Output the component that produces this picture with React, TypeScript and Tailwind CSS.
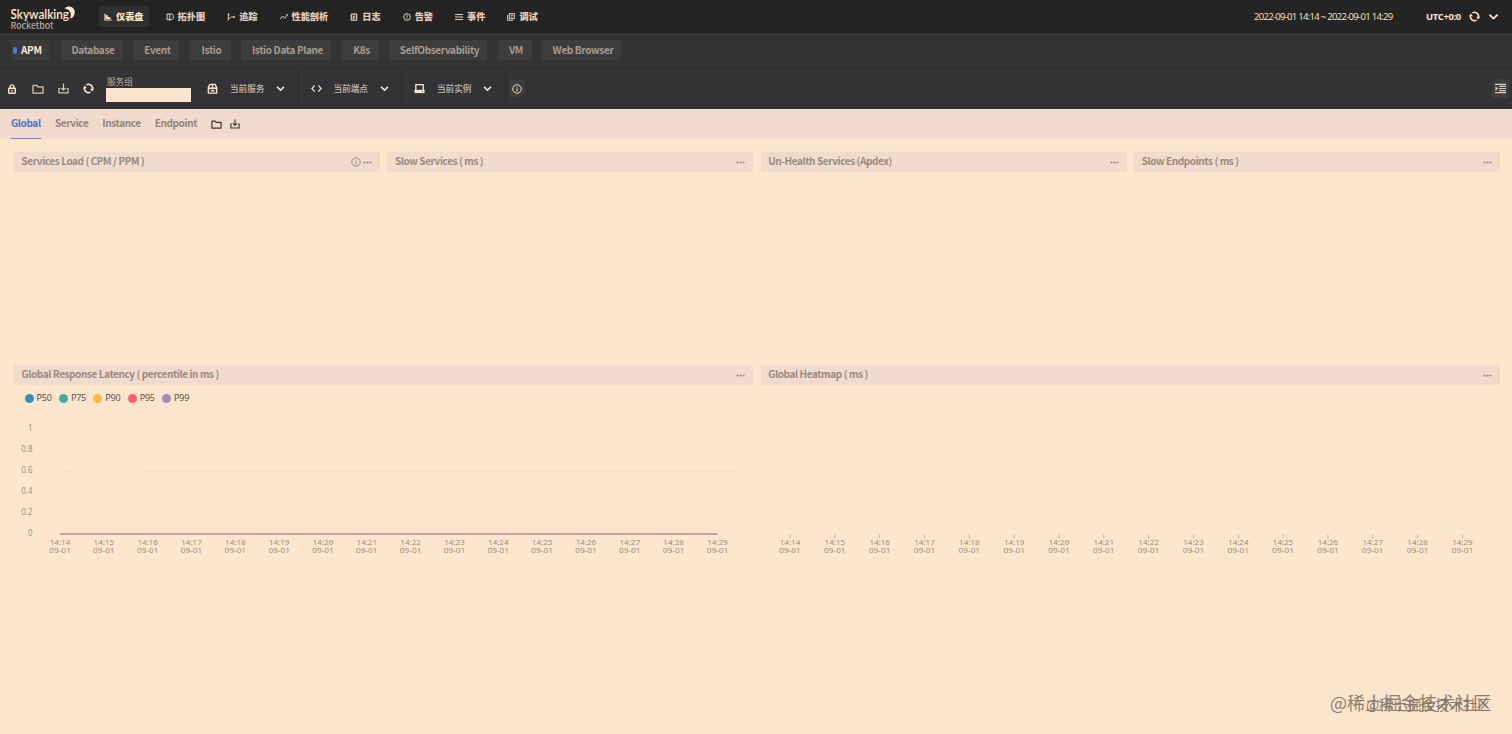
import type { ReactNode } from 'react';

type IconProps = { className?: string };

const Svg = ({ className = '', box = '0 0 24 24', children }: IconProps & { box?: string; children: ReactNode }) => (
  <svg viewBox={box} className={`shrink-0 ${className}`} fill="none" stroke="currentColor" strokeWidth={3}>
    {children}
  </svg>
);

const ChartIcon = (p: IconProps) => (
  <Svg {...p}>
    <path d="M3 2v19h20" strokeWidth={3.6} />
    <path d="M6 18V6h4.500v5h4v2h5v5z" fill="currentColor" stroke="none" />
  </Svg>
);

const TopologyIcon = (p: IconProps) => (
  <Svg {...p}>
    <path d="M11 3H3v17h8M11 1v22M12 3h6l4 4v9l-4 4h-6" />
  </Svg>
);

const TraceIcon = (p: IconProps) => (
  <Svg {...p}>
    <path d="M4 1v22M4 19c5 0 4-7 9-7h9" />
    <path d="M3 5h5" />
    <circle cx="21" cy="12" r="1.6" fill="currentColor" />
  </Svg>
);

const TrendIcon = (p: IconProps) => (
  <Svg {...p}>
    <path d="M1 18l7-9 6 7 8-11" />
    <circle cx="21.500" cy="5.500" r="1.200" fill="currentColor" />
  </Svg>
);

const LogIcon = (p: IconProps) => (
  <Svg {...p}>
    <rect x="4" y="3.500" width="16" height="18" rx="1" strokeWidth={3.6} />
    <path d="M8 9.500h8M8 13h8M8 16.500h5" />
  </Svg>
);

const InfoIcon = (p: IconProps) => (
  <Svg {...p}>
    <circle cx="12" cy="12" r="10.200" strokeWidth={2.2} />
    <path d="M12 10.500V18M12 6v2.600" strokeWidth={2.4} />
  </Svg>
);

const AlarmIcon = (p: IconProps) => (
  <Svg {...p}>
    <circle cx="12" cy="12" r="10" />
    <path d="M12 6v7.500M12 15.500V18" />
  </Svg>
);

const ListIcon = (p: IconProps) => (
  <Svg {...p}>
    <path d="M0 4.500h24M0 12h24M0 19.500h24" strokeWidth={3.6} />
  </Svg>
);

const DebugIcon = (p: IconProps) => (
  <Svg {...p}>
    <rect x="7" y="2" width="15" height="15" />
    <path d="M2 6v16h16M11 7h8M11 12h6" />
  </Svg>
);

const LockIcon = (p: IconProps) => (
  <Svg {...p}>
    <rect x="4" y="10" width="16" height="12" rx="1.500" strokeWidth={3.400} />
    <path d="M7.500 10V6.500a4.500 4.500 0 0 1 9 0V10" strokeWidth={3.200} />
    <circle cx="12" cy="16" r="2.200" fill="currentColor" stroke="none" />
  </Svg>
);

const FolderIcon = (p: IconProps) => (
  <Svg {...p}>
    <path d="M2 20V4.500h7l2.500 3H22V20z" strokeLinejoin="round" strokeWidth={2.500} />
  </Svg>
);

const DownloadIcon = (p: IconProps) => (
  <Svg {...p}>
    <path d="M5 12H2v9.500h20V12h-3M12 1v14M7 10.500l5 5 5-5" strokeLinejoin="round" strokeWidth={2.600} />
  </Svg>
);

const RefreshIcon = (p: IconProps) => (
  <Svg {...p}>
    <path d="M7.500 4A9.200 9.200 0 0 1 20.800 14M16.500 20A9.200 9.200 0 0 1 3.200 10" strokeWidth={3.400} />
    <path d="M15.500 12.500H24l-4 6zM0 11.500h8.500L4 5.500z" fill="currentColor" stroke="none" />
  </Svg>
);

const PackageIcon = (p: IconProps) => (
  <Svg {...p}>
    <path d="M3 22V9.500L6.500 3h11L21 9.500V22z" strokeLinejoin="round" strokeWidth={3} />
    <path d="M3 11.500h18" strokeWidth={3.600} />
    <path d="M12 3v8M8 17h8" />
  </Svg>
);

const CodeIcon = (p: IconProps) => (
  <Svg {...p}>
    <path d="M8 5l-6 7 6 7M16 5l6 7-6 7" strokeWidth={2.600} />
  </Svg>
);

const DiskIcon = (p: IconProps) => (
  <Svg {...p}>
    <path d="M4 16V3.500h16V16" strokeLinejoin="round" strokeWidth={3} />
    <path d="M1 15h22v7H1z" fill="currentColor" stroke="none" />
    <circle cx="18" cy="18.500" r="1.200" fill="#333335" stroke="none" />
  </Svg>
);

const ChevronIcon = (p: IconProps) => (
  <Svg {...p} box="0 0 12 12">
    <path d="M2.300 4.200L6 7.900l3.700-3.700" strokeWidth={1.700} />
  </Svg>
);

const IndentIcon = (p: IconProps) => (
  <Svg {...p}>
    <path d="M0 3h24M9 7.500h15M9 12h15M9 16.500h15M0 21h24" strokeWidth={2.600} />
    <path d="M1 7l6 5-6 5z" fill="currentColor" stroke="none" />
  </Svg>
);

const DotsIcon = ({ className = '' }: IconProps) => (
  <svg viewBox="0 0 9 3" className={`shrink-0 ${className}`} fill="currentColor">
    <circle cx="1.500" cy="1.500" r="1.050" />
    <circle cx="4.500" cy="1.500" r="1.050" />
    <circle cx="7.500" cy="1.500" r="1.050" />
  </svg>
);

const navItems = [
  { label: '仪表盘', Icon: ChartIcon },
  { label: '拓扑图', Icon: TopologyIcon },
  { label: '追踪', Icon: TraceIcon },
  { label: '性能剖析', Icon: TrendIcon },
  { label: '日志', Icon: LogIcon },
  { label: '告警', Icon: AlarmIcon },
  { label: '事件', Icon: ListIcon },
  { label: '调试', Icon: DebugIcon },
];

const groups = [
  { label: 'Database', width: 'w-[62px]' },
  { label: 'Event', width: 'w-[46px]' },
  { label: 'Istio', width: 'w-[41px]' },
  { label: 'Istio Data Plane', width: 'w-[90px]' },
  { label: 'K8s', width: 'w-[37px]' },
  { label: 'SelfObservability', width: 'w-[98px]' },
  { label: 'VM', width: 'w-[34px]' },
  { label: 'Web Browser', width: 'w-[79px]' },
];

const selectors = [
  { label: '当前服务', Icon: PackageIcon },
  { label: '当前端点', Icon: CodeIcon },
  { label: '当前实例', Icon: DiskIcon },
];

const legend = [
  { label: 'P50', color: 'bg-[#2d92c0]' },
  { label: 'P75', color: 'bg-[#40ae9c]' },
  { label: 'P90', color: 'bg-[#ffb545]' },
  { label: 'P95', color: 'bg-[#ff5c73]' },
  { label: 'P99', color: 'bg-[#a38cba]' },
];

const times = Array.from({ length: 16 }, (_, i) => `14:${14 + i}`);

function Logo() {
  return (
    <svg width="70" height="33" viewBox="0 0 70 33" className="shrink-0">
      <text x="-0.500" y="19.200" textLength="58.500" lengthAdjust="spacingAndGlyphs" fontFamily="Lato, sans-serif" fontSize="13" fontWeight="600" fill="#fee6ce">
        Skywalking
      </text>
      <text x="-0.500" y="28.800" textLength="43" lengthAdjust="spacingAndGlyphs" fontSize="9.200" fontWeight="500" fill="#b3a598">
        Rocketbot
      </text>
      <path d="M53.500 8.500C56.500 5.500 62 6 63.500 10.500c1 3.800-1.300 7.500-4.500 8.300 1.300-3.400 1-5.800-.3-7.500-1.200-1.600-3-2.500-5.200-2.800z" fill="#fee6ce" />
    </svg>
  );
}

function Header() {
  return (
    <header className="flex h-[33px] items-center bg-[#242424] pl-[11px] text-[#e2cebb]">
      <Logo />
      <nav className="ml-[18px] flex gap-3">
        {navItems.map(({ label, Icon }, i) => (
          <a
            key={label}
            className={`flex h-[21px] items-center gap-1 rounded-xs px-[5px] text-[9.2px] leading-none font-black ${i === 0 ? 'bg-[#303030] text-[#fee6ce]' : ''}`}
          >
            <Icon className="size-2" />
            {label}
          </a>
        ))}
      </nav>
      <div className="ml-auto flex items-center pr-[12px] font-['Open_Sans','Noto_Sans_CJK_SC',sans-serif] leading-none text-[#fee6ce]">
        <span className="w-[138px] text-[9.500px] tracking-[-0.7px] whitespace-nowrap">2022-09-01 14:14 ~ 2022-09-01 14:29</span>
        <span className="ml-[34px] w-[43px] text-[9.300px] font-bold tracking-[-0.3px] whitespace-nowrap">UTC+0:0</span>
        <RefreshIcon className="size-[11px]" />
        <ChevronIcon className="ml-[7px] size-[13px]" />
      </div>
    </header>
  );
}

function GroupBar() {
  return (
    <div className="flex h-[34px] items-center gap-[10.500px] bg-[#333334] pl-[11px] text-[10px] leading-none font-bold tracking-[-0.35px] text-[#a89b91]">
      <span className="flex h-5 w-[39px] items-center rounded-xs bg-[#3c3b3b] pl-[2px] text-[#fee6ce]">
        <i className="mr-1 h-[7px] w-1 rounded-full bg-[#477bd6]" />
        APM
      </span>
      {groups.map(({ label, width }) => (
        <span key={label} className={`flex h-5 items-center justify-center rounded-xs bg-[#3e3d3d] pl-[3px] whitespace-nowrap ${width}`}>
          {label}
        </span>
      ))}
    </div>
  );
}

function Toolbar() {
  return (
    <div className="flex h-[42px] items-center border-t border-[#2b2b2c] bg-[#333335] text-[#fee6ce]">
      <div className="flex h-9 w-[26px] items-center border-r border-[#303032] pl-[7px]">
        <LockIcon className="size-[10px]" />
      </div>
      <div className="flex h-9 w-[25px] items-center justify-center border-r border-[#303032]">
        <FolderIcon className="size-3 text-[#d9c8b8]" />
      </div>
      <div className="flex h-9 w-[25px] items-center justify-center border-r border-[#303032]">
        <DownloadIcon className="size-[11px] text-[#d9c8b8]" />
      </div>
      <div className="flex w-[25px] items-center justify-center">
        <RefreshIcon className="size-[11px]" />
      </div>
      <div className="ml-[5px] flex w-[85px] flex-col">
        <label className="ml-px text-[8.600px] leading-[13px] text-[#b9aba0]">服务组</label>
        <div className="h-[14px] bg-[#fee6ce]" />
      </div>
      <div className="ml-[4px] flex">
        {selectors.map(({ label, Icon }) => (
          <div key={label} className="flex h-9 w-[103.500px] items-center border-r border-[#29292a] pl-3">
            <Icon className="size-[11px]" />
            <span className="ml-3 w-[35px] text-[8.600px] leading-none font-medium whitespace-nowrap text-[#c8b8aa]">{label}</span>
            <ChevronIcon className="ml-[10px] size-[11px]" />
          </div>
        ))}
      </div>
      <span className="ml-[4px] flex h-[17px] w-[15px] items-center justify-center rounded-xs bg-[#3e3d3d]">
        <InfoIcon className="size-[10px]" />
      </span>
      <span className="mr-[3px] ml-auto flex h-[19px] w-[17px] items-center justify-center rounded-xs bg-[#3e3d3d]">
        <IndentIcon className="size-[11px] text-[#d9cabc]" />
      </span>
    </div>
  );
}

function Tabs() {
  return (
    <div className="flex h-[30px] items-start gap-[14.400px] border-t border-[#fbe3d2] bg-[#f1dacb] pl-[11px] text-[10px] leading-[26px] font-bold tracking-[-0.38px] text-[#94817a]">
      <span className="h-[29px] w-[29.500px] border-b border-[#6d87c9] text-[#4574ce]">Global</span>
      <span className="w-[33px]">Service</span>
      <span className="w-[38px]">Instance</span>
      <span className="w-[42px]">Endpoint</span>
      <span className="mt-[9px] flex gap-2 text-[#40352e]">
        <FolderIcon className="size-[11px]" />
        <DownloadIcon className="size-[10px]" />
      </span>
    </div>
  );
}

function Panel({ title, info, children }: { title: string; info?: boolean; children?: ReactNode }) {
  return (
    <section className="flex flex-col">
      <h2 className="flex h-5 items-center bg-[#f1dbcc] pr-[8px] pl-[7.500px] text-[10px] leading-none font-bold tracking-[-0.41px] text-[#9b8a80]">
        <span className="flex-1 pb-[2px]">{title}</span>
        {info && <InfoIcon className="mr-[2px] size-[10px]" />}
        <DotsIcon className="h-[3px] w-[9px]" />
      </h2>
      {children}
    </section>
  );
}

function TimeAxis({ start, step, ticks }: { start: number; step: number; ticks?: boolean }) {
  return (
    <g textAnchor="middle" fontSize="7.500" fill="#9c8c80">
      {times.map((time, i) => {
        const x = start + step * i;
        return (
          <g key={time}>
            {ticks && <path d={`M${x} 149.500v4`} stroke="#b3a498" strokeWidth="0.800" />}
            <text x={x} y="160.300" textLength="20.500" lengthAdjust="spacingAndGlyphs">{time}</text>
            <text x={x} y="168.300" textLength="21.500" lengthAdjust="spacingAndGlyphs">09-01</text>
          </g>
        );
      })}
    </g>
  );
}

const chartFont = "font-['Noto_Sans','Open_Sans',sans-serif]";

function LatencyChart() {
  return (
    <>
      <div className={`flex h-[26px] items-center pl-[10.500px] text-[9px] leading-none text-[#5b5049] ${chartFont}`}>
        {legend.map(({ label, color }) => (
          <span key={label} className="flex w-[34.400px] items-center gap-[3px] whitespace-nowrap">
            <i className={`size-[9px] shrink-0 rounded-full ${color}`} />
            <span className="pb-px tracking-[-0.2px]">{label}</span>
          </span>
        ))}
      </div>
      <svg viewBox="0 26 739 180" width="739" height="180" className={chartFont}>
        <g stroke="#f4dfcb" strokeWidth="1">
          <path d="M61 45.500h85M61 65.500h15M61 129.500h665" opacity="0.400" />
          <path d="M50 86.500h12M70 86.500h8M90 86.500h4M126 86.500h600" />
        </g>
        <g fontSize="8" textAnchor="end" fill="#a09084">
          {['1', '0.8', '0.6', '0.4', '0.2', '0'].map((value, i) => (
            <text key={value} x="18.500" y={45.800 + i * 21.100}>{value}</text>
          ))}
        </g>
        <path d="M46 149h657.500" stroke="#c6a3a4" strokeWidth="2" />
        <TimeAxis start={46} step={43.83} />
      </svg>
    </>
  );
}

function HeatmapChart() {
  return (
    <svg viewBox="0 0 739 206" width="739" height="206" className={chartFont}>
      <TimeAxis start={29} step={44.83} ticks />
    </svg>
  );
}

function Watermark() {
  return (
    <div className="pointer-events-none absolute right-[20px] bottom-[21px] h-[22px] w-[162px] whitespace-nowrap text-[#8f7d6e]">
      <span className="absolute top-0 left-0 text-[18px] leading-[22px] font-normal">@稀土掘金技术社区</span>
      <span className="absolute top-[3px] left-[36px] text-[14px] leading-[20px] text-[#8a796b]">@稀土掘金技术社区</span>
    </div>
  );
}

export default function App() {
  return (
    <div className="relative h-[734px] w-[1512px] overflow-hidden bg-[#fee6ce] font-['Noto_Sans_CJK_SC',sans-serif]">
      <Header />
      <GroupBar />
      <Toolbar />
      <Tabs />
      <main className="flex flex-col gap-[7px] pt-[13px] pr-[12px] pl-[14px]">
        <div className="grid h-[206px] grid-cols-4 gap-[7.500px]">
          <Panel title="Services Load ( CPM / PPM )" info />
          <Panel title="Slow Services ( ms )" />
          <Panel title="Un-Health Services (Apdex)" />
          <Panel title="Slow Endpoints ( ms )" />
        </div>
        <div className="grid grid-cols-2 gap-[7.500px]">
          <Panel title="Global Response Latency ( percentile in ms )">
            <LatencyChart />
          </Panel>
          <Panel title="Global Heatmap ( ms )">
            <HeatmapChart />
          </Panel>
        </div>
      </main>
      <Watermark />
    </div>
  );
}
